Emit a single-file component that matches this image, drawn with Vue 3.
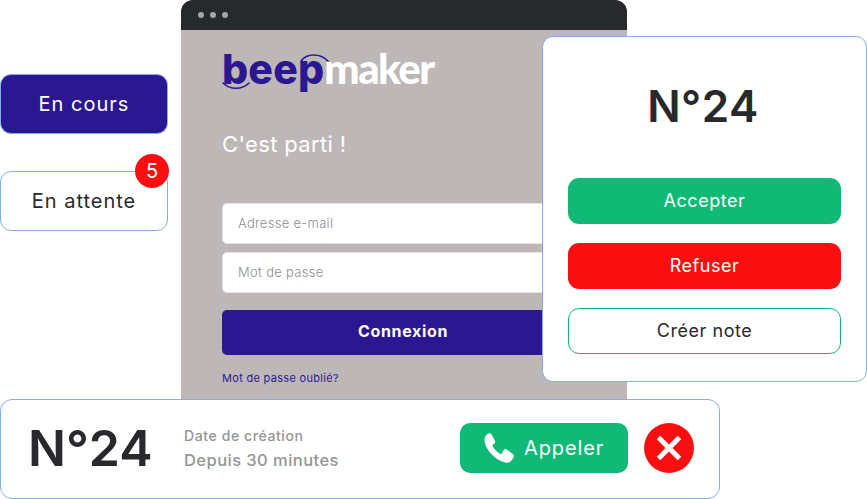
<script setup>
const tabs = [
  { label: 'En cours', active: true },
  { label: 'En attente', badge: 5 },
]
const actions = [
  { label: 'Accepter', kind: 'green' },
  { label: 'Refuser', kind: 'red' },
  { label: 'Créer note', kind: 'outline' },
]
</script>

<template>
  <div class="stage">
    <div class="tabs">
      <div v-for="t in tabs" :key="t.label" class="tab" :class="{ active: t.active }">
        {{ t.label }}
        <span v-if="t.badge" class="badge">{{ t.badge }}</span>
      </div>
    </div>

    <section class="window">
      <header class="titlebar"><i></i><i></i><i></i></header>
      <div class="login">
        <div class="logo">
          <svg class="arcs" width="120" height="44" viewBox="0 0 120 44" fill="none" aria-hidden="true">
            <path d="M1 33C8 40 20 40 27 33" stroke="#2b1791" stroke-width="1.6" stroke-linecap="round" />
            <path d="M79 11C85 3 98 3 106 11" stroke="#2b1791" stroke-width="1.6" stroke-linecap="round" />
          </svg>
          <span class="beep">beep</span><span class="maker">maker</span>
        </div>
        <h1>C'est parti !</h1>
        <div class="field">Adresse e-mail</div>
        <div class="field second">Mot de passe</div>
        <div class="submit">Connexion</div>
        <a class="forgot">Mot de passe oublié?</a>
      </div>
    </section>

    <section class="card-ticket">
      <div class="number">N°24</div>
      <div class="actions">
        <div v-for="a in actions" :key="a.label" class="action" :class="a.kind">{{ a.label }}</div>
      </div>
    </section>

    <section class="card-call">
      <div class="number big">N°24</div>
      <div class="meta">
        <span class="meta-a">Date de création</span>
        <span class="meta-b">Depuis 30 minutes</span>
      </div>
      <div class="call">
        <svg width="30" height="30" viewBox="0 0 30 30" aria-hidden="true">
          <path fill="#fff" d="M.5 7C.5 4 2 1.500 4.500.5 6 0 7 .5 7.600 1.600L11 8C11.400 9 11.200 9.800 10.400 10.400L9 11.500C8.400 12 8.300 12.700 8.700 13.500 10.300 16.200 13 19 16 20.700 16.700 21.100 17.300 21 17.800 20.400L20 16.500C20.700 15.800 21.500 15.700 22.300 16.200L28.800 21C29.800 21.800 30 22.700 29.600 23.700 28.600 26.500 26.500 29.500 23.500 29.800 13 29 1 17 .5 7z" />
        </svg>
        <span>Appeler</span>
      </div>
      <div class="close">
        <svg width="26" height="26" viewBox="0 0 26 26" aria-hidden="true">
          <path d="M2.500 2.500 23.500 23.500M23.500 2.500 2.500 23.500" stroke="#fff" stroke-width="5" />
        </svg>
      </div>
    </section>
  </div>
</template>

<style>
html, body { margin: 0; background: #fff; }
</style>

<style scoped>
.stage {
  position: relative;
  width: 867px;
  height: 499px;
  overflow: hidden;
  background: #fff;
  font-family: Inter, "Open Sans", sans-serif;
  color: #28292d;
}
.tabs {
  position: absolute;
  left: 0;
  top: 74px;
  width: 168px;
  display: flex;
  flex-direction: column;
  gap: 37px;
}
.tab {
  position: relative;
  box-sizing: border-box;
  height: 60px;
  display: flex;
  align-items: center;
  justify-content: center;
  background: #fff;
  border: 1px solid #7fb0ea;
  border-radius: 11px;
  font-size: 20px;
  letter-spacing: 1px;
}
.tab.active { background: #2b1791; color: #fff; }
.badge {
  position: absolute;
  right: -2px;
  top: -18px;
  width: 34px;
  height: 34px;
  border-radius: 50%;
  background: #f90f0f;
  color: #fff;
  font-size: 20px;
  letter-spacing: 0;
  display: flex;
  align-items: center;
  justify-content: center;
}
.window {
  position: absolute;
  left: 181px;
  top: 0;
  width: 446px;
  height: 420px;
  border-radius: 12px 12px 0 0;
  overflow: hidden;
  background: #bdb8b7;
}
.titlebar {
  height: 30px;
  background: #28292d;
  display: flex;
  align-items: center;
  gap: 6px;
  padding-left: 17px;
}
.titlebar i {
  width: 6px;
  height: 6px;
  border-radius: 50%;
  background: #a5a5ae;
}
.login {
  padding: 0 43px 0 41px;
  display: flex;
  flex-direction: column;
}
.logo {
  position: relative;
  height: 44px;
  margin-top: 20px;
  font-size: 41px;
  font-weight: 800;
  line-height: 37px;
  white-space: nowrap;
}
.arcs { position: absolute; left: 0; top: 0; }
.beep {
  color: #2b1791;
  letter-spacing: 0.2px;
}
.maker {
  color: #fff;
  font-family: Lato, sans-serif;
  font-size: 42px;
  font-weight: 900;
  letter-spacing: -1.600px;
}
h1 {
  margin: 33px 0 0;
  height: 34px;
  font-size: 22px;
  line-height: 34px;
  font-weight: 400;
  letter-spacing: 0.35px;
  color: #fff;
}
.field {
  box-sizing: border-box;
  height: 41px;
  margin-top: 42px;
  padding: 0 0 2px 15px;
  display: flex;
  align-items: center;
  background: #fff;
  border: 1px solid #e4e4e4;
  border-radius: 5px;
  font-size: 13px;
  font-weight: 300;
  letter-spacing: 0.3px;
  color: #8e8e8e;
}
.field.second { margin-top: 8px; }
.submit {
  box-sizing: border-box;
  height: 45px;
  margin-top: 17px;
  padding-bottom: 3px;
  display: flex;
  align-items: center;
  justify-content: center;
  background: #2b1791;
  border-radius: 5px;
  color: #fff;
  font-size: 16px;
  font-weight: 700;
  letter-spacing: 0.65px;
}
.forgot {
  margin-top: 16px;
  font-size: 11px;
  line-height: 14px;
  letter-spacing: 0.3px;
  color: #2b1791;
}
.card-ticket {
  position: absolute;
  left: 542px;
  top: 36px;
  box-sizing: border-box;
  width: 325px;
  height: 346px;
  padding: 0 25px;
  background: #fff;
  border: 1px solid #7fb0ea;
  border-radius: 11px;
}
.number {
  font-weight: 600;
  text-align: center;
  color: #28292d;
  white-space: nowrap;
}
.card-ticket .number {
  margin-top: 41px;
  padding-right: 3px;
  font-size: 44px;
  line-height: 56px;
  letter-spacing: 0.5px;
}
.actions {
  margin-top: 44px;
  display: flex;
  flex-direction: column;
  gap: 19px;
}
.action {
  box-sizing: border-box;
  height: 46px;
  padding-bottom: 2px;
  display: flex;
  align-items: center;
  justify-content: center;
  border-radius: 11px;
  font-size: 18px;
  letter-spacing: 0.55px;
}
.green { background: #10ba76; color: #fff; }
.red { background: #f90f0f; color: #fff; }
.outline { background: #fff; border: 1px solid #10ba76; color: #28292d; }
.card-call {
  position: absolute;
  left: 0;
  top: 399px;
  box-sizing: border-box;
  width: 720px;
  height: 100px;
  padding: 0 25px 2px 27px;
  display: flex;
  align-items: center;
  background: #fff;
  border: 1px solid #7fb0ea;
  border-radius: 12px;
}
.number.big {
  width: 156px;
  font-size: 50px;
  text-align: left;
}
.meta {
  display: flex;
  flex-direction: column;
  gap: 5px;
  width: 276px;
  color: #959595;
  font-weight: 500;
}
.meta-a { font-size: 14px; line-height: 18px; letter-spacing: 0.6px; }
.meta-b { font-size: 16.5px; line-height: 20px; letter-spacing: 0.45px; }
.call {
  box-sizing: border-box;
  width: 168px;
  height: 50px;
  padding-left: 24px;
  display: flex;
  align-items: center;
  gap: 10px;
  background: #10ba76;
  border-radius: 10px;
  color: #fff;
  font-size: 20px;
  letter-spacing: 0.9px;
}
.close {
  width: 50px;
  height: 50px;
  margin-left: 16px;
  border-radius: 50%;
  background: #f90f0f;
  display: flex;
  align-items: center;
  justify-content: center;
}
</style>
